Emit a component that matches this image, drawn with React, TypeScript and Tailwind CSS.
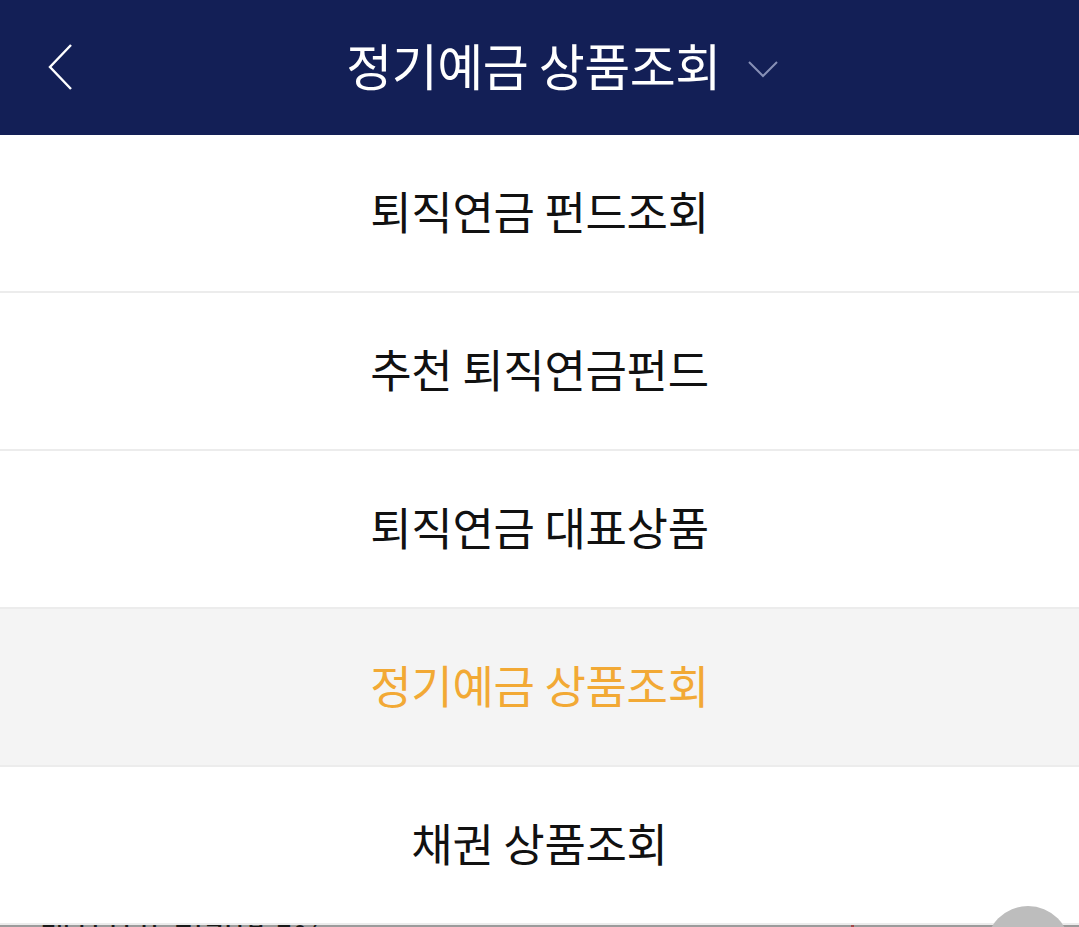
import React from 'react';

const items = ['퇴직연금 펀드조회', '추천 퇴직연금펀드', '퇴직연금 대표상품', '정기예금 상품조회', '채권 상품조회'];
const selected = '정기예금 상품조회';

const font = { fontFamily: '"Noto Sans CJK KR", "Noto Sans", sans-serif' };

const App: React.FC = () => {
  return (
    <div className="relative flex h-[927px] w-[1079px] flex-col overflow-hidden bg-white" style={font}>
      <header className="grid h-[135px] shrink-0 grid-cols-[1fr_auto_1fr] items-center bg-[#131f56] pb-[8px]">
        <div className="flex items-center pl-[46px] pt-[6px]">
          <svg width="30" height="48" viewBox="0 0 30 48" fill="none">
            <path d="M25 2 L4 24 L25 46" stroke="#ffffff" strokeWidth="2.4" />
          </svg>
        </div>
        <h1 className="mr-[12px] text-[50px] font-normal leading-none tracking-[-0.5px] text-white">정기예금 상품조회</h1>
        <div className="flex items-center pl-[15px] pt-[12px]">
          <svg width="30" height="17" viewBox="0 0 30 17" fill="none">
            <path d="M1 1 L15 15 L29 1" stroke="#8790b6" strokeWidth="2" />
          </svg>
        </div>
      </header>
      <ul className="flex flex-col">
        {items.map((label) => (
          <li
            key={label}
            className={
              label === selected
                ? 'flex h-[158px] items-center justify-center border-b-2 border-[#ececec] bg-[#f4f4f4] pb-[6px]'
                : 'flex h-[158px] items-center justify-center border-b-2 border-[#ececec] bg-white pb-[6px]'
            }
          >
            <span
              className={
                label === selected
                  ? 'text-[45px] leading-none tracking-[-0.3px] text-[#f2a935]'
                  : 'text-[45px] leading-none tracking-[-0.3px] text-[#111111]'
              }
            >
              {label}
            </span>
          </li>
        ))}
      </ul>
      <div className="relative flex-1 overflow-hidden bg-[#9b9b9b]">
        <div className="flex h-full items-start pl-[40px] pr-[31px]">
          <span className="-mt-[6px] text-[34px] leading-none text-[#1a1a1a]">대상상품 기간별 5%</span>
          <div className="ml-auto h-full w-[3px] bg-[#a14a4a]" />
          <div className="ml-[191px] h-full w-[3px] bg-[#a14a4a]" />
        </div>
      </div>
      <div className="absolute left-[986px] top-[906px] h-[84px] w-[84px] rounded-full bg-[#bdbdbd]" />
    </div>
  );
};

export default App;
